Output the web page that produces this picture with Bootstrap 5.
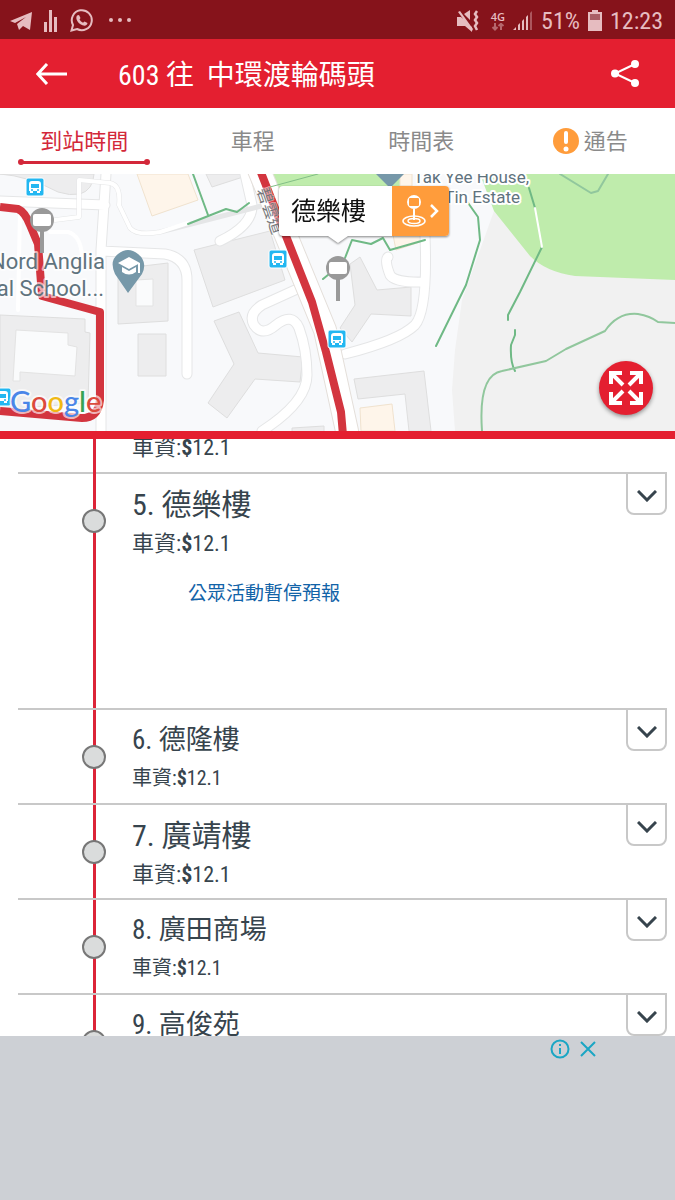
<!DOCTYPE html>
<html lang="zh-Hant">
<head>
<meta charset="utf-8">
<meta name="viewport" content="width=device-width, initial-scale=1">
<title>603 往 中環渡輪碼頭</title>
<link href="https://cdn.jsdelivr.net/npm/bootstrap@5.3.0/dist/css/bootstrap.min.css" rel="stylesheet">
<script src="https://cdn.jsdelivr.net/npm/bootstrap@5.3.0/dist/js/bootstrap.bundle.min.js" defer></script>
<style>
  body { font-family: "Roboto Condensed", "Liberation Sans Narrow", "Noto Sans CJK TC", Roboto, sans-serif; color: #37444d; background: #fff; }
  svg { display: block; flex: none; }
  .status { height: 39px; background: #86131b; color: #e6bcc0; font-size: 24px; line-height: 40px; padding: 2px 12px 0 10px; }
  .network { font-family: "Open Sans", sans-serif; font-weight: 600; font-size: 11px; line-height: 12px; }
  .appbar { height: 69px; background: #e41f30; color: #fff; padding: 0 36px; }
  .appbar h1 { font-size: 28px; line-height: 36px; margin: 0 0 0 51px; padding-top: 4px; font-weight: 400; white-space: pre; }
  .tabs { height: 66px; padding-right: 1px; }
  .tabs .nav-link { color: #8a8a8a; font-size: 22px; line-height: 32px; padding: 18px 0 0; height: 100%; border-radius: 0; }
  .tabs .nav-link.active { color: #d3283a; background: none; }
  .marker { width: 132px; height: 6px; margin: 1px auto 0; }
  .map { height: 265px; border-bottom: 8px solid #e41f30; background: #f8f9fb; overflow: hidden; }
  .map > svg { width: 100%; height: 257px; }
  .map text { font-family: Roboto, sans-serif; fill: #5f737e; stroke: #fff; stroke-width: 4px; paint-order: stroke; stroke-linejoin: round; }
  .map .road-name { font-family: "Noto Sans CJK TC", sans-serif; fill: #75767a; stroke-width: 2px; stroke-opacity: .5; }
  .map .brand { font-family: Lato, sans-serif; font-weight: 500; stroke-opacity: .65; }
  .callout { left: 279px; top: 12px; height: 50px; width: 170px; background: #fff; border-radius: 4px; filter: drop-shadow(0 1px 1px #0007); color: #111; font-size: 25px; line-height: 52px; }
  .callout::after { content: ""; position: absolute; left: 49px; top: 50px; border: solid transparent; border-width: 7px 10px 0; border-top-color: #fff; }
  .callout .btn { width: 57px; background: #ff9c3b; border: 0; border-radius: 0 4px 4px 0; }
  .expand { right: 22px; bottom: 16px; width: 54px; height: 54px; background: #e41f30; box-shadow: 0 2px 4px #0006; }
  .stops { flex: 1 1 0; min-height: 0; overflow: hidden; }
  .stop { margin: 0 8px 0 18px; padding-left: 64px; border-top: 2px solid #c8c8c8; height: 95px; }
  .stop.open { height: 236px; }
  .stop.cut { height: 33px; border: 0; }
  .stop.cut .fare { margin-top: -9px; }
  .rail { width: 24px; padding-top: 35px; background: linear-gradient(#dc2438, #dc2438) center/3px 100% no-repeat; }
  .dot { width: 24px; height: 24px; border: 2px solid #777; background: #dadcdc; border-radius: 50%; }
  .info { padding: 10px 0 0 26px; }
  .info h2 { font-size: 27px; line-height: 40px; margin: 0; font-weight: 400; }
  .fare { font-size: 20px; line-height: 36px; margin: 0; }
  .large h2 { font-size: 30px; line-height: 42px; }
  .large .fare { font-size: 22px; }
  .info a { color: #1263a8; font-size: 19px; line-height: 28px; margin: 18px 0 0 56px; text-decoration: none; }
  .toggle { width: 41px; height: 43px; margin-top: -2px; padding: 4px 0 0; border: 2px solid #c8c8c8; border-radius: 0 0 8px 8px; background: #fff; }
  .advert { height: 164px; background: #cdd0d5; padding: 1px 75px 0; }
  .advert .btn { width: 24px; height: 24px; }
</style>
</head>
<body class="d-flex flex-column vh-100 overflow-hidden">

<div class="status d-flex align-items-center flex-shrink-0">
  <svg width="22" height="20" viewBox="0 0 22 20" fill="currentColor"><path d="M0 10 22 1 20 19l-7-4-4 4-2-6 9-7-11 6z"/></svg>
  <svg class="ms-2 ps-1" width="18" height="22" viewBox="0 0 14 22" fill="currentColor"><path d="M0 12h3v10H0zM5 0h3v22H5zM10 7h3v15h-3z"/></svg>
  <svg class="ms-2 ps-1" width="27" height="23" viewBox="0 0 23 23" fill="none" stroke="currentColor" stroke-width="2"><path d="M1.500 21.500 3 16A10 10 0 1 1 7 20z"/><path d="M7 6.500 9 6l1.500 3-1 1.500c1 1.500 2 2.500 3.500 3.200l1.500-1.300 3 1.600c-.5 3-3 3-5 2.200-3-1-5-3-6-6-.3-1.500 0-3 .5-3.700z" fill="currentColor" stroke="none"/></svg>
  <svg class="ms-3" width="22" height="6" viewBox="0 0 22 6" fill="currentColor"><circle cx="2" cy="2" r="2"/><circle cx="11" cy="2" r="2"/><circle cx="20" cy="2" r="2"/></svg>
  <div class="d-flex align-items-center ms-auto">
    <svg width="22" height="22" viewBox="0 0 22 22" fill="currentColor"><path d="M0 7h4l11 10v5l-7-6H0zM7 4l6-4v10zM1 2l2-1 13 18-1 2z"/><path d="M20 1l-2 3 2 3-2 3 2 3-2 3 2 4" fill="none" stroke="currentColor" stroke-width="2.500"/></svg>
    <div class="network ms-2 ps-1 d-flex flex-column align-items-center"><span>4G</span><svg width="14" height="8" viewBox="0 0 14 8" fill="none" stroke="currentColor" stroke-width="2" stroke-opacity=".5"><path d="M4 0v6M1.500 4 4 6.500 6.500 4M10 7V1M7.500 3 10 .8 12.500 3"/></svg></div>
    <svg class="ms-2" width="20" height="20" viewBox="0 0 20 20" fill="currentColor"><path d="M0 19l3-3v3zM5 14l2-2v7H5zM9 10l2-2v11H9zM13 6l2-2v15h-2z"/><path d="M17 2l2-2v19h-2z" opacity=".4"/></svg>
    <span class="ms-2">51%</span>
    <svg class="ms-2" width="14" height="21" viewBox="0 0 14 21" fill="currentColor"><path d="M4 0h6v2h4v19H0V2h4z"/><path d="M2 4h10v6H2z" fill="#a95e65"/></svg>
    <span class="ms-2">12:23</span>
  </div>
</div>

<header class="appbar d-flex align-items-center flex-shrink-0">
  <button class="btn p-0 border-0" aria-label="返回"><svg width="31" height="22" viewBox="0 0 31 22" fill="none" stroke="#fff" stroke-width="3"><path d="M1.500 11H31M11 1 1.800 11 11 21"/></svg></button>
  <h1>603 往  中環渡輪碼頭</h1>
  <button class="btn p-0 border-0 ms-auto" aria-label="分享"><svg width="28" height="27" viewBox="0 0 28 27" fill="#fff" stroke="#fff" stroke-width="2"><path d="M24 4 4 13.500 24 23" fill="none"/><circle cx="4" cy="13.500" r="3"/><circle cx="24" cy="4" r="3"/><circle cx="24" cy="23" r="3"/></svg></button>
</header>

<nav class="tabs nav nav-justified flex-shrink-0">
  <a class="nav-link active" href="#arrival">到站時間<svg class="marker" viewBox="0 0 132 6" fill="#d3283a"><path d="M3 2h126v3H3z"/><circle cx="3" cy="3" r="3"/><circle cx="129" cy="3" r="3"/></svg></a>
  <a class="nav-link" href="#journey">車程</a>
  <a class="nav-link" href="#timetable">時間表</a>
  <a class="nav-link" href="#notice"><span class="d-flex justify-content-center align-items-center"><svg width="28" height="28" viewBox="0 0 28 28"><circle cx="14" cy="13" r="13" fill="#ff9c3b"/><path d="M14 5v9" stroke="#fff" stroke-width="4" stroke-linecap="round"/><circle cx="14" cy="21" r="2.500" fill="#fff"/></svg><span class="ps-1">通告</span></span></a>
</nav>

<section class="map position-relative flex-shrink-0" aria-label="地圖">
  <svg viewBox="0 174 675 257" preserveAspectRatio="xMidYMid slice">
    <defs>
      <g id="bus"><rect x="-9" y="-9" width="18" height="18" rx="2" fill="#23b7f1" stroke="#fff" stroke-width="1"/><path d="M-6 4V-3q0-3 3-3h6q3 0 3 3v7h-1v2h-3v-2h-4v2h-3v-2z" fill="#fff"/><path d="M-4-3h8v4h-8z" fill="#23b7f1"/><path d="M-4 3h2M2 3h2" stroke="#23b7f1" stroke-width="1.500"/></g>
      <g id="post"><path d="M0 10v23" stroke="#999" stroke-width="4"/><circle r="12" fill="#999"/><rect x="-9" y="-6" width="18" height="12" rx="2" fill="#fff"/></g>
    </defs>
    <rect y="174" width="675" height="257" fill="#f8f9fb"/>
    <path d="M494 211 480 250 462 300 455 350 452 390 455 431H675V174H490z" fill="#f1f1f1"/>
    <path d="M480 174 494 211 530 256Q546 272 575 276L675 280V174zM270 174H400V192H280z" fill="#bfecac"/>
    <path d="M400 174h12v12h-12zM137 174h51l10 26-46 16zM360 408l32-4 3 27h-34zM392 230l34-6v16l-30 10z" fill="#fef5ea" stroke="#f0e2ce"/>
    <g fill="#ededee" stroke="#dedede" stroke-width="1">
      <path d="M0 174h94q-1 16-14 20-10 2-22-2-30-16-58-18z"/>
      <path d="M206 174h34l3 3-31 10z"/>
      <path d="M0 315 85 319v13l5 1-2 70-70 5H0z"/>
      <path d="M118 269l50-6v58l-50 3zM138 334h28v42h-28z"/>
      <path d="M194 250 270 231 285 280 213 307z"/>
      <path d="M214 321 239 312 258 353 303 357 300 382 255 379 227 418 208 403 234 364z"/>
      <path d="M350 264 360 257 377 290 411 287V316L371 314 352 342 340 328 355 305z"/>
      <path d="M354 379 424 371 431 431H409L405 394 358 399zM292 428l32-2v6h-32z"/>
    </g>
    <path d="M16 330l52 3v12l9 2-2 29-55-4v9H13zM136 280l17-1v27h-17z" fill="#fafbfc" stroke="#e3e3e3"/>
    <g fill="none" stroke-linejoin="round" stroke-linecap="round">
      <g stroke="#e5e6e7" stroke-width="11">
        <path d="M0 201 105 205M106 174 101 250V431M101 251 165 254Q187 258 187 280V374"/>
        <path d="M245 174 252 205Q253 225 220 241M295 290 262 305Q248 314 254 325 262 337 276 325 292 312 299 328 307 350 307 375 307 402 262 431"/>
        <path d="M345 354Q400 340 415 325 428 310 425 236M425 282Q395 283 390 275 384 260 388 257"/>
      </g>
      <g stroke="#fff" stroke-width="9">
        <path d="M0 201 105 205M106 174 101 250V431M101 251 165 254Q187 258 187 280V374"/>
        <path d="M245 174 252 205Q253 225 220 241M295 290 262 305Q248 314 254 325 262 337 276 325 292 312 299 328 307 350 307 375 307 402 262 431"/>
        <path d="M345 354Q400 340 415 325 428 310 425 236M425 282Q395 283 390 275 384 260 388 257"/>
      </g>
      <path d="M55 220 79 217V180L110 183Q121 185 119 205L130 228Q137 236 160 232L265 205" stroke="#e5e6e7" stroke-width="5"/>
      <path d="M55 220 79 217V180L110 183Q121 185 119 205L130 228Q137 236 160 232L188 223M50 232H68Q82 236 82 260M20 210 18 310" stroke="#fff" stroke-width="4"/>
      <path d="M259 170 290 245 325 330 347 431" stroke="#e4dfda" stroke-width="24"/>
      <path d="M259 170 290 245 325 330 347 431" stroke="#fff" stroke-width="22"/>
      <g stroke="#d3353f" stroke-width="8" stroke-linecap="butt"><path d="M258 165 312 302 326 352 341 412 343 435"/><path d="M0 207 18 209Q25 212 30 225L38 244 42 296 100 312V400Q98 418 82 418L0 411"/></g>
      <g stroke="#6fb985" stroke-width="2">
        <path d="M193 174 208 215M188 224 226 209 237 212 249 203M345 258 352 240 371 244 383 238 390 250 425 240M323 279 334 270"/>
        <path d="M466 200 478 217 480 240 466 285 436 346M529 188 535 208M542 247 520 292 508 315V320M515 330V335L511 345Q510 362 515 371"/>
        <path d="M482 431Q478 375 502 371L546 361 566 349 605 331Q618 312 638 314 650 316 658 322L675 323M560 174 591 193 598 191 608 174" stroke="#91c79d"/>
      </g>
      <path d="M535 208 542 247" stroke="#fff" stroke-width="2"/>
      <path d="M270 187 318 174" stroke="#82be86"/>
    </g>
    <path d="M376 174h28l-14 14z" fill="#7698a9"/>
    <use href="#post" x="42" y="220"/><use href="#post" x="338" y="268"/>
    <use href="#bus" x="35" y="187"/><use href="#bus" x="278" y="259"/><use href="#bus" x="337" y="339"/><use href="#bus" x="2" y="397"/>
    <path d="M128 293 115 274Q109 261 118 254 128 246 138 254 148 262 142 274z" fill="#7698a9"/>
    <path d="M129 257 118 263 129 269 140 263zM122 267v5q7 5 14 0v-5l-7 4zM138 264v9h2v-10z" fill="#fff"/>
    <text x="105" y="269" text-anchor="end" font-size="22" stroke-opacity=".6">Nord Anglia</text>
    <text x="104" y="296" text-anchor="end" font-size="22" stroke-opacity=".6">al School...</text>
    <text x="529" y="183" text-anchor="end" font-size="17">Tak Yee House,</text>
    <text x="520" y="203" text-anchor="end" font-size="17">Tin Estate</text>
    <text class="road-name" transform="translate(257 190) rotate(71)" font-size="16">碧雲道</text>
    <text class="brand" x="10" y="412" font-size="29"><tspan fill="#4a86e8">G</tspan><tspan fill="#dc4a3d">o</tspan><tspan fill="#f0b913">o</tspan><tspan fill="#4a86e8">g</tspan><tspan fill="#37a353">l</tspan><tspan fill="#dc4a3d">e</tspan></text>
  </svg>
  <div class="callout position-absolute d-flex justify-content-between">
    <span class="ps-2 ms-1">德樂樓</span>
    <button class="btn p-0 d-flex align-items-center justify-content-center" aria-label="查看巴士站"><svg width="40" height="34" viewBox="0 0 40 34" fill="none" stroke="#fff" stroke-width="2"><circle cx="13" cy="8" r="7" fill="#fff" stroke="none"/><rect x="8" y="4" width="10" height="8" rx="1" fill="#ff9c3b" stroke="none"/><path d="M13 15v11"/><ellipse cx="13" cy="27" rx="11" ry="5" stroke-width="1.500"/><ellipse cx="13" cy="27" rx="6" ry="2.500" stroke-width="1.500"/><path d="M30 11l6 6-6 6" stroke-width="2.500"/></svg></button>
  </div>
  <button class="expand btn p-0 border-0 rounded-circle position-absolute d-flex align-items-center justify-content-center" aria-label="全螢幕"><svg width="34" height="34" viewBox="0 0 34 34" fill="none" stroke="#fff" stroke-width="4"><path d="M2 13V2h11M2 2l12 12M21 2h11v11M32 2 20 14M2 21v11h11M2 32l12-12M32 21v11H21M32 32 20 20"/></svg></button>
</section>

<main class="stops">
  <div class="stop cut large d-flex"><div class="rail"></div><div class="info flex-fill pt-0"><p class="fare">車資:<b>$</b>12.1</p></div></div>
  <div class="stop open large d-flex"><div class="rail"><div class="dot"></div></div><div class="info flex-fill"><h2>5. 德樂樓</h2><p class="fare">車資:<b>$</b>12.1</p><a class="d-inline-block" href="#forecast">公眾活動暫停預報</a></div>
    <button class="toggle" aria-label="展開"><svg class="mx-auto" width="20" height="12" viewBox="0 0 20 12" fill="none" stroke="#37444d" stroke-width="3"><path d="M1 1l9 9 9-9"/></svg></button></div>
  <div class="stop d-flex"><div class="rail"><div class="dot"></div></div><div class="info flex-fill"><h2>6. 德隆樓</h2><p class="fare">車資:<b>$</b>12.1</p></div>
    <button class="toggle" aria-label="展開"><svg class="mx-auto" width="20" height="12" viewBox="0 0 20 12" fill="none" stroke="#37444d" stroke-width="3"><path d="M1 1l9 9 9-9"/></svg></button></div>
  <div class="stop large d-flex"><div class="rail"><div class="dot"></div></div><div class="info flex-fill"><h2>7. 廣靖樓</h2><p class="fare">車資:<b>$</b>12.1</p></div>
    <button class="toggle" aria-label="展開"><svg class="mx-auto" width="20" height="12" viewBox="0 0 20 12" fill="none" stroke="#37444d" stroke-width="3"><path d="M1 1l9 9 9-9"/></svg></button></div>
  <div class="stop d-flex"><div class="rail"><div class="dot"></div></div><div class="info flex-fill"><h2>8. 廣田商場</h2><p class="fare">車資:<b>$</b>12.1</p></div>
    <button class="toggle" aria-label="展開"><svg class="mx-auto" width="20" height="12" viewBox="0 0 20 12" fill="none" stroke="#37444d" stroke-width="3"><path d="M1 1l9 9 9-9"/></svg></button></div>
  <div class="stop d-flex"><div class="rail"><div class="dot"></div></div><div class="info flex-fill"><h2>9. 高俊苑</h2></div>
    <button class="toggle" aria-label="展開"><svg class="mx-auto" width="20" height="12" viewBox="0 0 20 12" fill="none" stroke="#37444d" stroke-width="3"><path d="M1 1l9 9 9-9"/></svg></button></div>
</main>

<aside class="advert d-flex justify-content-end flex-shrink-0" aria-label="廣告">
  <button class="btn p-0 border-0" aria-label="廣告資訊"><svg class="mx-auto" width="20" height="20" viewBox="0 0 20 20" fill="none" stroke="#1ba6c4" stroke-width="2"><circle cx="10" cy="10" r="8.500"/><path d="M10 9v6M10 5v2"/></svg></button>
  <button class="btn p-0 border-0 ms-1 rounded-0" aria-label="關閉廣告"><svg class="mx-auto" width="16" height="16" viewBox="0 0 16 16" stroke="#1ba6c4" stroke-width="2"><path d="M1 1l14 14M15 1 1 15"/></svg></button>
</aside>
</body>
</html>
